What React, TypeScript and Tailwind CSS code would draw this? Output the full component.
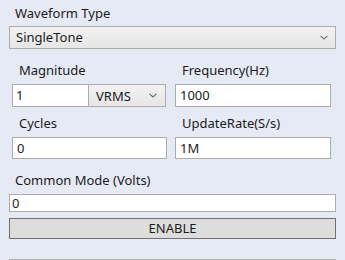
import React from "react";

const Chevron = () => (
  <svg width="8" height="5" viewBox="0 0 8 5" className="shrink-0">
    <path d="M0.5 0.8 L4 4 L7.5 0.8" fill="none" stroke="#6d6d6d" strokeWidth="1.1" />
  </svg>
);

export default function App() {
  return (
    <div
      className="w-[345px] h-[260px] bg-[#e6eaf5] overflow-hidden flex flex-col text-[13px] text-[#1b1b1b]"
      style={{ fontFamily: '"Noto Sans", "Open Sans", sans-serif' }}
    >
      <div className="pl-[15px] mt-[3px] h-[20px] leading-[20px]">Waveform Type</div>
      <div className="mx-[9px] mt-[3px] h-[24px] border border-[#acacac] bg-gradient-to-b from-[#f2f2f2] to-[#e6e6e6] flex items-center justify-between pl-[6px] pr-[7px]">
        <span>SingleTone</span>
        <Chevron />
      </div>
      <div className="mt-[11px] pl-[12px] pr-[14px] grid grid-cols-[155px_156px] gap-x-[8px]">
        <div className="flex flex-col">
          <div className="pl-[7px] h-[20px] leading-[20px]">Magnitude</div>
          <div className="mt-[4px] flex h-[23px]">
            <div className="w-[77px] border border-[#acacac] bg-white pl-[3px] leading-[20px]">1</div>
            <div className="w-[78px] -ml-px border border-[#acacac] bg-gradient-to-b from-[#f2f2f2] to-[#e6e6e6] flex items-end justify-between pl-[7px] pr-[8px] pb-[1px]">
              <span className="leading-[18px]">VRMS</span>
              <span className="mb-[7px]"><Chevron /></span>
            </div>
          </div>
          <div className="mt-[6px] pl-[7px] h-[20px] leading-[20px]">Cycles</div>
          <div className="mt-[4px] h-[22px] border border-[#acacac] bg-white pl-[4px] leading-[20px]">0</div>
        </div>
        <div className="flex flex-col">
          <div className="pl-[7px] h-[20px] leading-[20px]">Frequency(Hz)</div>
          <div className="mt-[4px] h-[23px] border border-[#acacac] bg-white pl-[4px] leading-[20px]">1000</div>
          <div className="mt-[6px] pl-[7px] h-[20px] leading-[20px]">UpdateRate(S/s)</div>
          <div className="mt-[4px] h-[22px] border border-[#acacac] bg-white pl-[4px] leading-[20px]">1M</div>
        </div>
      </div>
      <div className="pl-[15px] mt-[11px] h-[20px] leading-[20px]">Common Mode (Volts)</div>
      <div className="mx-[9px] mt-[4px] h-[18px] border border-[#acacac] bg-white pl-[2px] leading-[16px]">0</div>
      <div className="mx-[9px] mt-[6px] h-[21px] border border-[#707070] bg-[#dddddd] flex items-center justify-center leading-[19px]">ENABLE</div>
      <div className="mx-[9px] mt-[20px] h-px bg-[#acacac]" />
    </div>
  );
}
